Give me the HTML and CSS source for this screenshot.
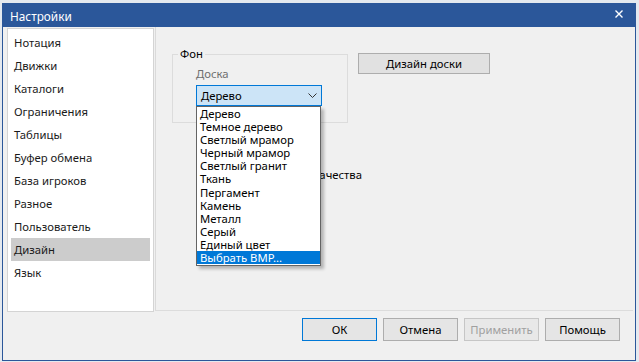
FILE: index.html
```html
<!DOCTYPE html>
<html lang="ru">
<head>
<meta charset="utf-8">
<title>Настройки</title>
<link rel="stylesheet" href="styles.css">
</head>
<body>
<div class="window">
  <div class="titlebar">
    <span class="title">Настройки</span>
    <svg class="close" width="10" height="10" viewBox="0 0 10 10"><path d="M1.5 1.5 L8.5 8.5 M8.5 1.5 L1.5 8.5" stroke="#fff" stroke-width="1.4" fill="none"/></svg>
  </div>
  <div class="content">
    <ul class="navlist">
      <li>Нотация</li>
      <li>Движки</li>
      <li>Каталоги</li>
      <li>Ограничения</li>
      <li>Таблицы</li>
      <li>Буфер обмена</li>
      <li>База игроков</li>
      <li>Разное</li>
      <li>Пользователь</li>
      <li class="selected">Дизайн</li>
      <li>Язык</li>
    </ul>
    <div class="panel">
      <div class="toprow">
        <div class="group">
          <span class="legend">Фон</span>
          <div class="label">Доска</div>
          <div class="combo-wrap">
            <div class="combo">
              <span>Дерево</span>
              <svg class="chev" width="9" height="6" viewBox="0 0 9 6"><path d="M0.5 0.5 L4.5 4.5 L8.5 0.5" stroke="#333" stroke-width="1" fill="none"/></svg>
            </div>
            <ul class="dropdown">
              <li>Дерево</li>
              <li>Темное дерево</li>
              <li>Светлый мрамор</li>
              <li>Черный мрамор</li>
              <li>Светлый гранит</li>
              <li>Ткань</li>
              <li>Пергамент</li>
              <li>Камень</li>
              <li>Металл</li>
              <li>Серый</li>
              <li>Единый цвет</li>
              <li class="hl">Выбрать BMP...</li>
            </ul>
          </div>
        </div>
        <button class="btn design">Дизайн доски</button>
      </div>
      <div class="quality"><span>Режим высокого качества</span></div>
    </div>
  </div>
  <div class="footer">
    <button class="btn default">ОК</button>
    <button class="btn">Отмена</button>
    <button class="btn disabled">Применить</button>
    <button class="btn">Помощь</button>
  </div>
</div>
</body>
</html>
```

FILE: styles.css
```css
html, body {
  margin: 0;
  padding: 0;
}
body {
  width: 639px;
  height: 362px;
  overflow: hidden;
  background: #e4e9ef;
  padding: 3px 0 0 2px;
  box-sizing: border-box;
  font-family: "Noto Sans", "Open Sans", sans-serif;
  font-size: 11.3px;
  color: #000;
}
.window {
  width: 634px;
  height: 358px;
  box-sizing: border-box;
  border: 1px solid #2b579a;
  background: #f0f0f0;
  display: flex;
  flex-direction: column;
}
.titlebar {
  height: 23px;
  flex: none;
  background: #2b579a;
  color: #fff;
  display: flex;
  align-items: center;
  justify-content: space-between;
  padding: 0 11px 0 7px;
  font-size: 11.8px;
}
.title {
  line-height: 16px;
}
.close {
  margin-top: -4px;
}
.content {
  display: flex;
  height: 285px;
  flex: none;
  padding-left: 4px;
  gap: 1px;
}
.navlist {
  list-style: none;
  margin: 1px 0 0 0;
  padding: 2px 3px;
  width: 147px;
  height: 284px;
  box-sizing: border-box;
  background: #fff;
  border: 1px solid #d4d4d4;
}
.navlist li {
  height: 23px;
  line-height: 23px;
  padding-left: 3px;
  color: #1a1a1a;
}
.navlist li.selected {
  background: #cccccc;
}
.panel {
  flex: 1;
  margin-right: 2px;
  height: 284px;
  box-sizing: border-box;
  border-left: 1px solid #dadada;
  border-bottom: 1px solid #dcdcdc;
  padding: 27px 0 0 16px;
}
.toprow {
  display: flex;
  align-items: flex-start;
}
.group {
  position: relative;
  width: 176px;
  height: 69px;
  box-sizing: border-box;
  border: 1px solid #dcdcdc;
  padding: 12px 0 0 23px;
}
.legend {
  position: absolute;
  top: -9px;
  left: 5px;
  padding: 0 2px;
  background: #f0f0f0;
  line-height: 16px;
}
.label {
  color: #6d6d6d;
  line-height: 14px;
  margin-bottom: 4px;
}
.combo-wrap {
  position: relative;
  width: 126px;
}
.combo {
  height: 21px;
  box-sizing: border-box;
  background: #cce4f7;
  border: 1px solid #0078d7;
  display: flex;
  align-items: center;
  justify-content: space-between;
  padding: 0 4px 0 4px;
}
.dropdown {
  position: absolute;
  top: 21px;
  left: 0;
  width: 125px;
  margin: 0;
  padding: 0;
  list-style: none;
  background: #fff;
  border: 1px solid #646464;
  box-sizing: border-box;
  box-shadow: 3px 3px 3px rgba(0, 0, 0, 0.25);
  z-index: 5;
}
.dropdown li {
  height: 13.1px;
  line-height: 13px;
  padding-left: 3px;
  white-space: nowrap;
}
.dropdown li.hl {
  background: #0078d7;
  color: #fff;
  margin: 0 0 1px 0;
}
.btn {
  font-family: "Noto Sans", "Open Sans", sans-serif;
  font-size: 11.3px;
  font-weight: normal;
  background: #e1e1e1;
  border: 1px solid #adadad;
  color: #000;
  padding: 0;
  margin: 0;
  box-sizing: border-box;
}
.design {
  width: 132px;
  height: 21px;
  margin-left: 10px;
  margin-top: -1px;
}
.quality {
  width: 42px;
  margin: 44px 0 0 148px;
  line-height: 16px;
  display: flex;
  justify-content: flex-end;
  white-space: nowrap;
  overflow: hidden;
}
.footer {
  display: flex;
  justify-content: flex-end;
  gap: 6px;
  padding: 6px 15px 0 0;
}
.footer .btn {
  width: 75px;
  height: 23px;
  background: #e5e5e5;
}
.footer .default {
  border-color: #0078d7;
}
.footer .disabled {
  color: #a0a0a0;
  border-color: #c6c6c6;
  background: #e8e8e8;
}
```
